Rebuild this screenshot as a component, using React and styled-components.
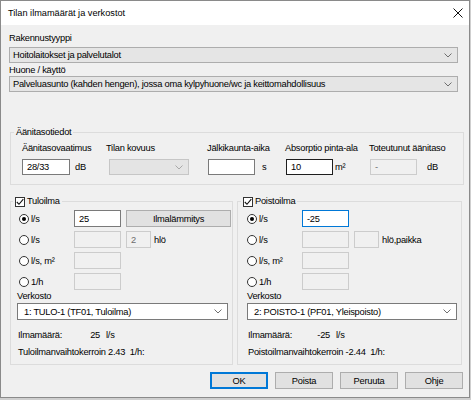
import React from 'react';
import styled, { createGlobalStyle, css } from 'styled-components';

const GlobalStyle = createGlobalStyle`
  body {
    margin: 0;
    background: #cfcfcf;
    font-family: "Liberation Sans", Arial, sans-serif;
  }
`;

const Window = styled.div`
  box-sizing: content-box;
  width: 468px;
  height: 396px;
  border: 1px solid #8a8a8a;
  background: #f0f0f0;
  display: flex;
  flex-direction: column;
  font-size: 9.3px;
  letter-spacing: -0.25px;
  color: #000;
`;

const TitleBar = styled.div`
  height: 24px;
  background: #fff;
  display: flex;
  align-items: center;
  justify-content: space-between;
  padding: 0 6px 0 7px;
  font-size: 9.2px;
  letter-spacing: 0;
`;

const Body = styled.div`
  padding: 7px 5px 0 8px;
  display: flex;
  flex-direction: column;
`;

const Label = styled.div`
  line-height: 12px;
  white-space: nowrap;
  margin-top: ${({ $mt }) => $mt || 0}px;
`;

const Combo = styled.div`
  box-sizing: border-box;
  height: ${({ $h }) => $h || 16}px;
  width: ${({ $w }) => ($w ? `${$w}px` : 'auto')};
  margin: ${({ $m }) => $m || '0'};
  display: flex;
  align-items: center;
  justify-content: space-between;
  padding: 0 5px 0 ${({ $pl }) => $pl || 3}px;
  white-space: nowrap;
  ${({ $kind }) =>
    $kind === 'white'
      ? css`
          background: #fff;
          border: 1px solid #7a7a7a;
        `
      : $kind === 'disabled'
      ? css`
          background: #e4e4e4;
          border: 1px solid #c6c6c6;
          color: #8a8a8a;
        `
      : css`
          background: #e5e5e5;
          border: 1px solid #adadad;
        `}
`;

const Group = styled.fieldset`
  margin: ${({ $m }) => $m || '0'};
  padding: ${({ $p }) => $p};
  border: 1px solid #dcdcdc;
  min-width: 0;
`;

const Legend = styled.legend`
  padding: 0 2px;
  margin-left: ${({ $shift }) => $shift}px;
  line-height: ${({ $lh }) => $lh || 12}px;
  display: flex;
  align-items: center;
  gap: 2px;
`;

const SoundGrid = styled.div`
  display: grid;
  grid-template-columns: 84px 101px 78px 84px auto;
`;

const Cell = styled.div`
  display: flex;
  flex-direction: column;
  gap: 5px;
`;

const ControlRow = styled.div`
  display: flex;
  align-items: center;
  gap: ${({ $gap }) => $gap || 0}px;
  padding-left: ${({ $indent }) => $indent || 0}px;
`;

const TextBox = styled.div`
  box-sizing: border-box;
  width: ${({ $w }) => $w}px;
  height: ${({ $h }) => $h || 16}px;
  padding-left: 4px;
  display: flex;
  align-items: center;
  white-space: nowrap;
  ${({ $state }) =>
    $state === 'disabled'
      ? css`
          background: #f0f0f0;
          border: 1px solid #cccccc;
          color: #6d6d6d;
        `
      : $state === 'focus'
      ? css`
          background: #fff;
          border: 1px solid #0078d7;
        `
      : $state === 'hover'
      ? css`
          background: #fff;
          border: 1px solid #1e1e1e;
        `
      : css`
          background: #fff;
          border: 1px solid #7a7a7a;
        `}
`;

const AirRow = styled.div`
  display: grid;
  grid-template-columns: 50px 47px auto;
  column-gap: 5px;
  align-items: center;
  height: 17px;
`;

const AirRows = styled.div`
  display: flex;
  flex-direction: column;
  gap: 4px;
  padding-left: ${({ $indent }) => $indent || 0}px;
`;

const RadioLabel = styled.div`
  display: flex;
  align-items: center;
  gap: 2px;
  white-space: nowrap;
`;

const Radio = styled.span`
  box-sizing: border-box;
  width: 10px;
  height: 10px;
  border-radius: 50%;
  border: 1px solid #333;
  background: #fff;
  display: flex;
  align-items: center;
  justify-content: center;
  &::after {
    content: '';
    width: 4px;
    height: 4px;
    border-radius: 50%;
    background: ${({ $on }) => ($on ? '#000' : 'transparent')};
  }
`;

const CheckBox = styled.span`
  box-sizing: border-box;
  width: 10px;
  height: 10px;
  border: 1px solid #333;
  background: #fff;
  display: flex;
  align-items: center;
  justify-content: center;
`;

const Extra = styled.div`
  display: flex;
  align-items: center;
  gap: 3px;
  white-space: nowrap;
`;

const Button = styled.button`
  box-sizing: border-box;
  width: ${({ $w }) => $w || 58}px;
  height: 17px;
  padding: 0;
  font: inherit;
  letter-spacing: inherit;
  color: #000;
  background: #e1e1e1;
  border: 1px solid ${({ $default }) => ($default ? '#0078d7' : '#adadad')};
  box-shadow: ${({ $default }) => ($default ? 'inset 0 0 0 1px #0078d7' : 'none')};
`;

const AirColumns = styled.div`
  display: grid;
  grid-template-columns: 223px 225px;
  column-gap: 4px;
  margin: 10px 0 0 1px;
`;

const Info = styled.div`
  display: flex;
  align-items: center;
  line-height: 12px;
  white-space: pre;
  margin-top: ${({ $mt }) => $mt}px;
  padding-left: ${({ $indent }) => $indent || 0}px;
`;

const InfoKey = styled.span`
  width: 60px;
`;

const InfoValue = styled.span`
  width: 22px;
  text-align: right;
  margin-right: 6px;
`;

const ButtonBar = styled.div`
  display: flex;
  justify-content: flex-end;
  gap: 7px;
  margin: 7px 1px 0 0;
`;

const Chevron = ({ color = '#606060' }) => (
  <svg width="8" height="5" viewBox="0 0 8 5">
    <polyline points="0.5,0.5 4,4 7.5,0.5" fill="none" stroke={color} strokeWidth="0.9" />
  </svg>
);

const CloseIcon = () => (
  <svg width="10" height="10" viewBox="0 0 10 10">
    <path d="M0.5 0.5 L9.5 9.5 M9.5 0.5 L0.5 9.5" stroke="#111" strokeWidth="1" />
  </svg>
);

const Check = () => (
  <svg width="8" height="8" viewBox="0 0 8 8">
    <polyline points="0.8,4 3,6.3 7.3,1.2" fill="none" stroke="#111" strokeWidth="1.1" />
  </svg>
);

const soundCols = [
  { label: 'Äänitasovaatimus', value: '28/33', unit: 'dB', gap: 5, indent: 0 },
  { label: 'Tilan kovuus', combo: true, indent: 3 },
  { label: 'Jälkikaunta-aika', value: '', unit: 's', gap: 7, indent: 1 },
  { label: 'Absorptio pinta-ala', value: '10', unit: 'm²', gap: 2, indent: 1, state: 'hover' },
  { label: 'Toteutunut äänitaso', value: '-', unit: 'dB', gap: 10, indent: 1, state: 'disabled' },
];

const AirGroup = ({ title, pad, shift, indent, first, perUnit, network, flow, coef }) => {
  const rows = [
    { label: 'l/s', on: true },
    { label: 'l/s' },
    { label: 'l/s, m²' },
    { label: '1/h' },
  ];
  return (
    <Group $p={`2px 4px 6px ${pad}px`}>
      <Legend $shift={shift} $lh={13}>
        <CheckBox>
          <Check />
        </CheckBox>
        {title}
      </Legend>
      <AirRows $indent={indent}>
        {rows.map((r, i) => (
          <AirRow key={i}>
            <RadioLabel>
              <Radio $on={r.on} />
              {r.label}
            </RadioLabel>
            <TextBox $w={47} $h={17} $state={i === 0 ? first.state : 'disabled'}>
              {i === 0 ? first.value : ''}
            </TextBox>
            {i === 0 && first.button && <Button $w={105}>Ilmalämmitys</Button>}
            {i === 1 && (
              <Extra>
                <TextBox $w={25} $h={17} $state="disabled">
                  {perUnit.value}
                </TextBox>
                {perUnit.unit}
              </Extra>
            )}
          </AirRow>
        ))}
      </AirRows>
      <Label>Verkosto</Label>
      <Combo $kind="white" $h={17} $pl={6} $m="1px 0 0 0">
        {network}
        <Chevron />
      </Combo>
      <Info $mt={9} $indent={1}>
        <InfoKey>Ilmamäärä:</InfoKey>
        <InfoValue>{flow}</InfoValue>
        l/s
      </Info>
      <Info $mt={5} $indent={1}>
        {coef}
      </Info>
    </Group>
  );
};

const App = () => (
  <>
    <GlobalStyle />
    <Window>
      <TitleBar>
        <span>Tilan ilmamäärät ja verkostot</span>
        <CloseIcon />
      </TitleBar>
      <Body>
        <Label>Rakennustyyppi</Label>
        <Combo $m="3px 6px 0 0">
          Hoitolaitokset ja palvelutalot
          <Chevron />
        </Combo>
        <Label $mt={1}>Huone / käyttö</Label>
        <Combo $m="0 6px 0 0">
          Palveluasunto (kahden hengen), jossa oma kylpyhuone/wc ja keittomahdollisuus
          <Chevron />
        </Combo>

        <Group $m="34px 0 0 1px" $p="4px 4px 9px 11px">
          <Legend $shift={-8}>Äänitasotiedot</Legend>
          <SoundGrid>
            {soundCols.map((c) => (
              <Cell key={c.label}>
                <Label>{c.label}</Label>
                {c.combo ? (
                  <ControlRow $indent={c.indent}>
                    <Combo $kind="disabled" $w={80}>
                      <span />
                      <Chevron color="#a0a0a0" />
                    </Combo>
                  </ControlRow>
                ) : (
                  <ControlRow $gap={c.gap} $indent={c.indent}>
                    <TextBox $w={c.indent ? 47 : 48} $state={c.state}>
                      {c.value}
                    </TextBox>
                    {c.unit}
                  </ControlRow>
                )}
              </Cell>
            ))}
          </SoundGrid>
        </Group>

        <AirColumns>
          <AirGroup
            title="Tuloilma"
            pad={6}
            shift={-4}
            indent={2}
            first={{ value: '25', button: true }}
            perUnit={{ value: '2', unit: 'hlö' }}
            network="1: TULO-1 (TF01, Tuloilma)"
            flow="25"
            coef="Tuloilmanvaihtokerroin 2.43  1/h:"
          />
          <AirGroup
            title="Poistoilma"
            pad={9}
            shift={-6}
            indent={0}
            first={{ value: '-25', state: 'focus' }}
            perUnit={{ value: '', unit: 'hlö,paikka' }}
            network="2: POISTO-1 (PF01, Yleispoisto)"
            flow="-25"
            coef="Poistoilmanvaihtokerroin -2.44  1/h:"
          />
        </AirColumns>

        <ButtonBar>
          <Button $default>OK</Button>
          <Button>Poista</Button>
          <Button>Peruuta</Button>
          <Button>Ohje</Button>
        </ButtonBar>
      </Body>
    </Window>
  </>
);

export default App;
